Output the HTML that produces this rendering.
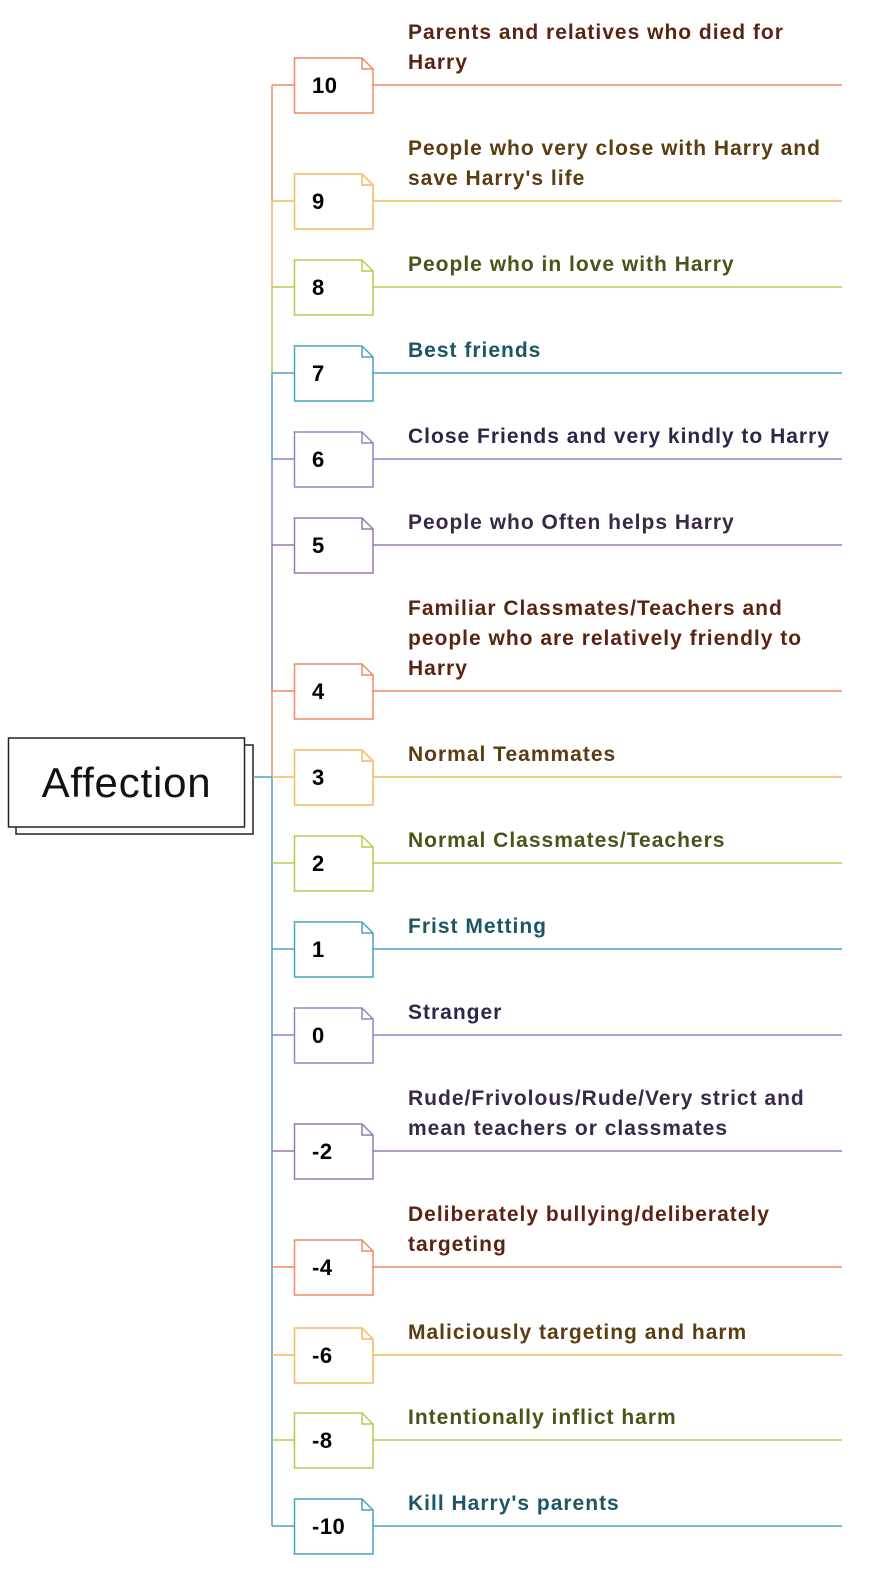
<!DOCTYPE html>
<html><head><meta charset="utf-8"><style>
body{margin:0;width:888px;height:1584px;background:#fff;position:relative;overflow:hidden;font-family:"Liberation Sans",sans-serif}
.a{position:absolute}
.t{position:absolute;left:408px;font-weight:bold;font-size:21px;letter-spacing:1px;line-height:30px;white-space:nowrap}
.n{position:absolute;left:312px;font-weight:bold;font-size:22px;letter-spacing:0.5px;color:#000;width:60px}
</style></head><body>
<svg class="a" style="left:0;top:0" width="888" height="1584">
<g fill="none" stroke-width="1.5" id="g"></g>
<rect x="16" y="745" width="237" height="89" fill="#fff" stroke="#222" stroke-width="1.5"/>
<rect x="8.5" y="738" width="236" height="89" fill="#fff" stroke="#222" stroke-width="1.5"/>
<line x1="253" y1="777" x2="272" y2="777" stroke="#4aa3c0" stroke-width="1.5"/>
</svg>
<div class="a" style="left:8px;top:738px;width:237px;height:89px;line-height:89px;text-align:center;font-size:42px;letter-spacing:0.8px;color:#111">Affection</div>
<div id="c"></div>
<script>
var O=['#f08a62','#f6b860','#b9cb52','#4aa3c0','#8a87c2','#9c76b2'];
var T=['#5a2410','#5c3c10','#4a5418','#1d5466','#28284a','#3a2846'];
var rows=[
[85,'10',0,'Parents and relatives who died for<br>Harry',2],
[201,'9',1,"People who very close with Harry and<br>save Harry's life",2],
[287,'8',2,'People who in love with Harry',1],
[373,'7',3,'Best friends',1],
[459,'6',4,'Close Friends and very kindly to Harry',1],
[545,'5',5,'People who Often helps Harry',1],
[691,'4',0,'Familiar Classmates/Teachers and<br>people who are relatively friendly to<br>Harry',3],
[777,'3',1,'Normal Teammates',1],
[863,'2',2,'Normal Classmates/Teachers',1],
[949,'1',3,'Frist Metting',1],
[1035,'0',4,'Stranger',1],
[1151,'-2',5,'Rude/Frivolous/Rude/Very strict and<br>mean teachers or classmates',2],
[1267,'-4',0,'Deliberately bullying/deliberately<br>targeting',2],
[1355,'-6',1,'Maliciously targeting and harm',1],
[1440,'-8',2,'Intentionally inflict harm',1],
[1526,'-10',3,"Kill Harry's parents",1]];
var s='',h='';
for(var i=0;i<7;i++){var y=rows[i][0],c=O[rows[i][2]],y2=i<6?rows[i+1][0]:777;
 s+='<line x1="272" y1="'+y+'" x2="272" y2="'+y2+'" stroke="'+c+'"/>';}
s+='<line x1="272" y1="777" x2="272" y2="1526" stroke="#4aa3c0"/>';
rows.forEach(function(r){var y=r[0],c=O[r[2]];
 s+='<line x1="272" y1="'+y+'" x2="294" y2="'+y+'" stroke="'+c+'"/>';
 s+='<line x1="373" y1="'+y+'" x2="842" y2="'+y+'" stroke="'+c+'"/>';
 var t=y-27,b=y+28;
 s+='<path d="M294.5 '+t+' H362 L373 '+(t+11)+' V'+b+' H294.5 Z" fill="#fff" stroke="'+c+'"/>';
 s+='<path d="M362 '+t+' V'+(t+11)+' H373" stroke="'+c+'"/>';
 h+='<div class="n" style="top:'+(y-13)+'px;line-height:28px">'+r[1]+'</div>';
 h+='<div class="t" style="top:'+(y-7-30*r[4])+'px;color:'+T[r[2]]+'">'+r[3]+'</div>';
});
document.getElementById('g').innerHTML=s;
document.getElementById('c').innerHTML=h;
</script>
</body></html>
